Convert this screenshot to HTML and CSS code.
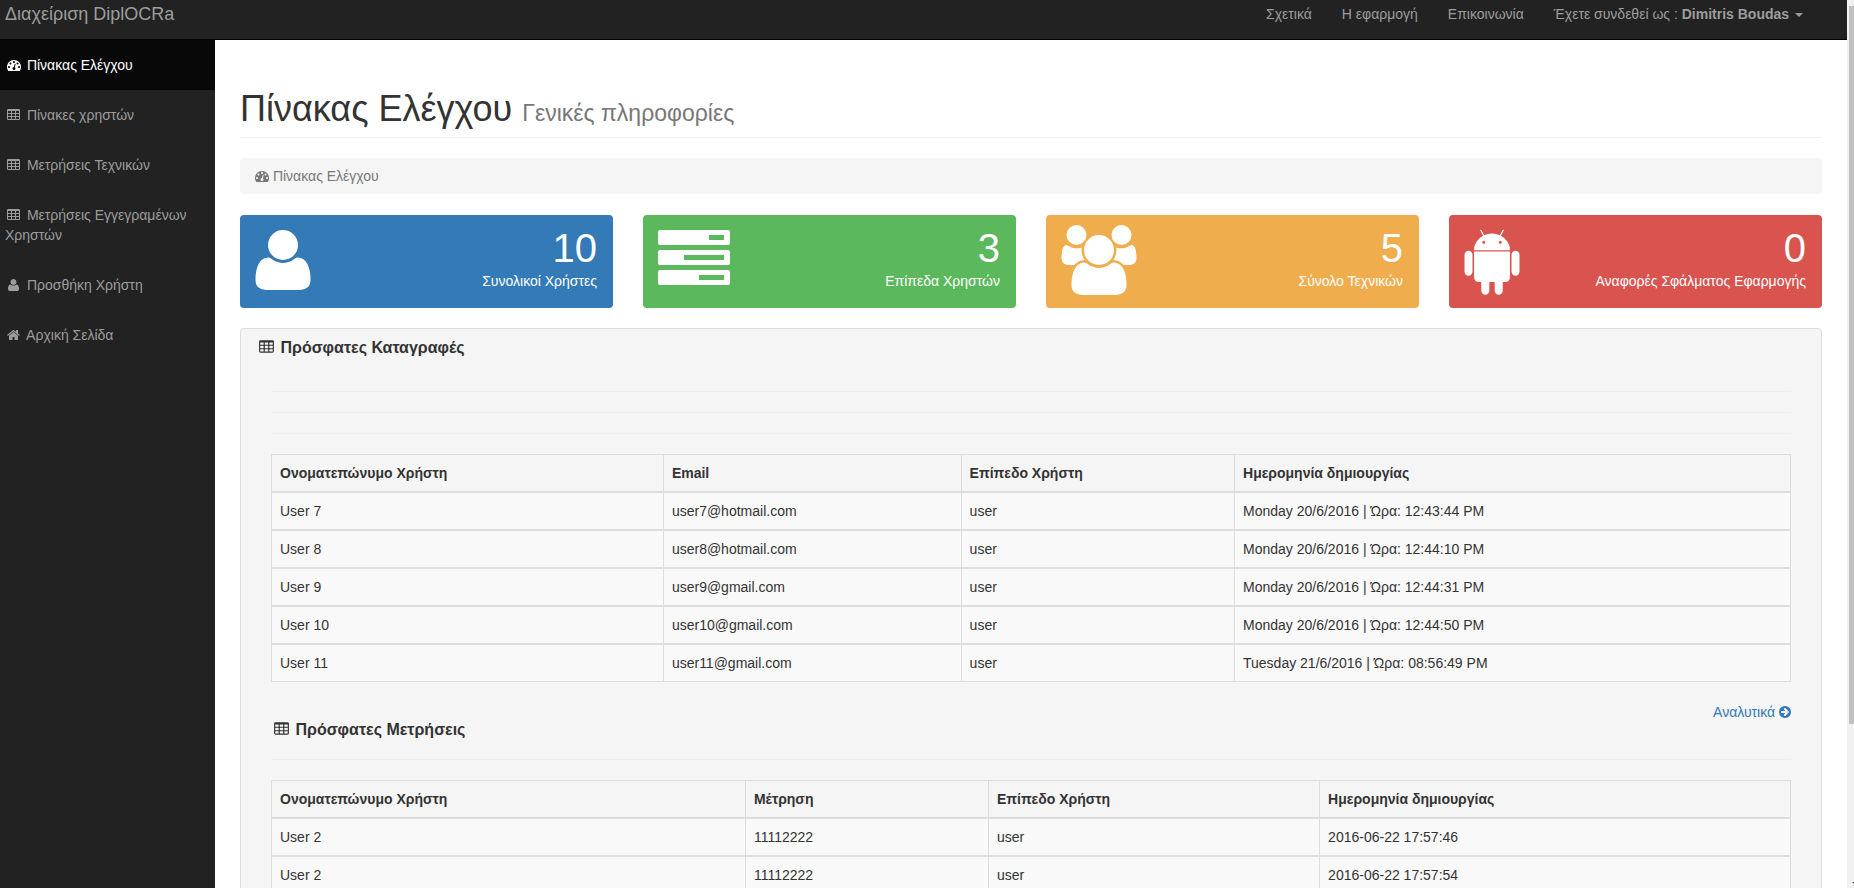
FILE: index.html
```html
<!DOCTYPE html>
<html lang="el">
<head>
<meta charset="utf-8">
<title>Διαχείριση DiplOCRa</title>
<link rel="stylesheet" href="styles.css">
</head>
<body>
<svg class="sprite" aria-hidden="true">
  <symbol id="dashboard" viewBox="0 0 1792 1792"><path fill-rule="evenodd" d="M384 1152q0-53-37.500-90.500t-90.500-37.500-90.500 37.500-37.500 90.500 37.500 90.500 90.500 37.500 90.500-37.500 37.500-90.500zm192-448q0-53-37.500-90.500t-90.500-37.500-90.500 37.500-37.500 90.500 37.500 90.500 90.500 37.500 90.500-37.500 37.500-90.500zm428 481l101-382q6-26-7.500-48.500t-38.500-29.500-48 6.500-30 39.500l-101 382q-60 5-107 43.500t-63 98.500q-20 77 20 146t117 89 146-20 89-117q16-60-6-117t-72-91zm660-33q0-53-37.500-90.500t-90.500-37.500-90.500 37.500-37.500 90.500 37.500 90.500 90.500 37.500 90.500-37.500 37.500-90.500zm-640-640q0-53-37.500-90.500t-90.500-37.500-90.500 37.500-37.500 90.500 37.500 90.500 90.500 37.500 90.500-37.500 37.500-90.500zm448 192q0-53-37.500-90.500t-90.500-37.500-90.500 37.500-37.500 90.500 37.500 90.500 90.500 37.500 90.500-37.500 37.500-90.500zm320 448q0 261-141 483-19 29-54 29h-1402q-35 0-54-29-141-221-141-483 0-182 71-348t191-286 286-191 348-71 348 71 286 191 191 286 71 348z"/></symbol>
  <symbol id="table" viewBox="0 0 1664 1792"><path fill-rule="evenodd" d="M160 128h1344q66 0 113 47t47 113v1088q0 66-47 113t-113 47H160q-66 0-113-47T0 1376V288q0-66 47-113t113-47zM128 416v192q0 32 32 32h320q32 0 32-32V416q0-32-32-32H160q-32 0-32 32zm512 0v192q0 32 32 32h320q32 0 32-32V416q0-32-32-32H672q-32 0-32 32zm512 0v192q0 32 32 32h320q32 0 32-32V416q0-32-32-32h-320q-32 0-32 32zM128 800v192q0 32 32 32h320q32 0 32-32V800q0-32-32-32H160q-32 0-32 32zm512 0v192q0 32 32 32h320q32 0 32-32V800q0-32-32-32H672q-32 0-32 32zm512 0v192q0 32 32 32h320q32 0 32-32V800q0-32-32-32h-320q-32 0-32 32zM128 1184v192q0 32 32 32h320q32 0 32-32v-192q0-32-32-32H160q-32 0-32 32zm512 0v192q0 32 32 32h320q32 0 32-32v-192q0-32-32-32H672q-32 0-32 32zm512 0v192q0 32 32 32h320q32 0 32-32v-192q0-32-32-32h-320q-32 0-32 32z"/></symbol>
  <symbol id="user" viewBox="256 128 1408 1792"><path d="M1664 1533q0 120-73 189.500t-194 69.500H523q-121 0-194-69.500T256 1533q0-53 3.500-103.500t14-109T300 1212t43-97.500 62-81 85.500-53.500T602 960q10 0 43 21.500t73 48 107 48 135 21.500 135-21.500 107-48 73-48 43-21.500q61 0 111.500 20t85.500 53.500 62 81 43 97.500 26.500 108.500 14 109 3.500 103.500zM1344 640q0 159-112.500 271.500T960 1024 688.500 911.500 576 640t112.500-271.500T960 256t271.500 112.500T1344 640z"/></symbol>
  <symbol id="home" viewBox="0 0 1664 1792"><path d="M1408 992v480q0 26-19 45t-45 19H960v-384H704v384H320q-26 0-45-19t-19-45V992l1-3 575-474 575 474q1 1 1 3zm223-69l-62 74q-8 9-21 11h-3q-13 0-21-7L832 424 140 1001q-12 8-24 7-13-2-21-11l-62-74q-8-10-7-23.500T37 878l719-599q32-26 76-26t76 26l244 204V288q0-14 9-23t23-9h192q14 0 23 9t9 23v408l219 182q10 8 11 21.500t-7 23.500z"/></symbol>
  <symbol id="arrow-right" viewBox="0 0 1536 1792"><path fill-rule="evenodd" d="M1285 896q0-27-18-45L905 489l-91-91q-18-18-45-18t-45 18l-91 91q-18 18-18 45t18 45l189 189H320q-26 0-45 19t-19 45v128q0 26 19 45t45 19h502l-189 189q-19 19-19 45t19 45l91 91q18 18 45 18t45-18l362-362 91-91q18-18 18-45zm251 0q0 209-103 385.500T1153.500 1561 768 1664t-385.500-103T103 1281.500 0 896t103-385.500T382.500 231 768 128t385.500 103T1433 510.500 1536 896z"/></symbol>
  <symbol id="tasks" viewBox="0 0 72 70"><path fill-rule="evenodd" d="M2 0h68q2 0 2 2v11q0 2-2 2H2q-2 0-2-2V2q0-2 2-2zm49 5v5h15V5zM2 20h68q2 0 2 2v11q0 2-2 2H2q-2 0-2-2V22q0-2 2-2zm24 5v5h40v-5zM2 40h68q2 0 2 2v11q0 2-2 2H2q-2 0-2-2V42q0-2 2-2zm39 5v5h25v-5z"/></symbol>
  <symbol id="group" viewBox="0 0 1920 1792"><path d="M593 896q-162 5-265 128H194q-82 0-138-40.500T0 865q0-353 124-353 6 0 43.500 21t97.500 42.500T384 597q67 0 133-23-5 37-5 66 0 139 81 256zm1071 637q0 120-73 189.500t-194 69.500H523q-121 0-194-69.500T256 1533q0-53 3.500-103.500t14-109T300 1212t43-97.500 62-81 85.500-53.500T602 960q10 0 43 21.500t73 48 107 48 135 21.500 135-21.500 107-48 73-48 43-21.500q61 0 111.500 20t85.500 53.500 62 81 43 97.500 26.500 108.500 14 109 3.500 103.500zM640 256q0 106-75 181t-181 75-181-75-75-181 75-181T384 0t181 75 75 181zm704 384q0 159-112.500 271.500T960 1024 688.500 911.500 576 640t112.500-271.500T960 256t271.500 112.500T1344 640zm576 225q0 78-56 118.500t-138 40.500h-134q-103-123-265-128 81-117 81-256 0-29-5-66 66 23 133 23 59 0 119-21.500t97.500-42.500 43.500-21q124 0 124 353zm-128-609q0 106-75 181t-181 75-181-75-75-181 75-181 181-75 181 75 75 181z"/></symbol>
  <symbol id="android" viewBox="0 0 1408 1792"><path fill-rule="evenodd" d="M493 483q16 0 27.500-11.500T532 444t-11.500-27.500T493 405t-27 11.500-11 27.500 11 27.500 27 11.500zm422 0q16 0 27-11.500t11-27.500-11-27.500-27-11.500-27.500 11.500T876 444t11.500 27.500T915 483zM103 661q42 0 72 30t30 72v430q0 43-29.500 73t-72.500 30-73-30-30-73V763q0-42 30-72t73-30zm1060 19v666q0 46-32 78t-77 32h-75v227q0 43-30 73t-73 30-73-30-30-73v-227H635v227q0 43-30 73t-73 30q-42 0-72-30t-30-73l-1-227h-74q-46 0-78-32t-32-78V680h918zM931 275q107 55 171 153.500t64 215.500H241q0-117 64-215.500T477 275L406 144q-7-13 5-20 13-6 20 6l72 132q95-42 201-42t201 42l72-132q7-12 20-6 12 7 5 20zm477 488v430q0 43-30 73t-73 30q-42 0-72-30t-30-73V763q0-43 30-72.500t72-29.500q43 0 73 29.500t30 72.500z"/></symbol>
</svg>

<header class="navbar">
  <a class="brand" href="#">Διαχείριση DiplOCRa</a>
  <nav class="top-nav">
    <a href="#">Σχετικά</a>
    <a href="#">Η εφαρμογή</a>
    <a href="#">Επικοινωνία</a>
    <a href="#">Έχετε συνδεθεί ως : <b>Dimitris Boudas</b> <span class="caret"></span></a>
  </nav>
</header>

<div class="layout">
  <nav class="sidebar">
    <a class="active" href="#"><svg class="icon icon-dashboard"><use href="#dashboard"/></svg> Πίνακας Ελέγχου</a>
    <a href="#"><svg class="icon icon-table"><use href="#table"/></svg> Πίνακες χρηστών</a>
    <a href="#"><svg class="icon icon-table"><use href="#table"/></svg> Μετρήσεις Τεχνικών</a>
    <a href="#"><svg class="icon icon-table"><use href="#table"/></svg> Μετρήσεις Εγγεγραμένων Χρηστών</a>
    <a href="#"><svg class="icon icon-user"><use href="#user"/></svg> Προσθήκη Χρήστη</a>
    <a href="#"><svg class="icon icon-home"><use href="#home"/></svg> Αρχική Σελίδα</a>
  </nav>

  <main class="content">
    <h1 class="page-header">Πίνακας Ελέγχου <small>Γενικές πληροφορίες</small></h1>
    <ol class="breadcrumb"><li><svg class="icon"><use href="#dashboard"/></svg> Πίνακας Ελέγχου</li></ol>

    <section class="cards">
      <article class="card blue"><svg class="art art-user"><use href="#user"/></svg><div class="figure"><div class="huge">10</div><div>Συνολικοί Χρήστες</div></div></article>
      <article class="card green"><svg class="art art-tasks"><use href="#tasks"/></svg><div class="figure"><div class="huge">3</div><div>Επίπεδα Χρηστών</div></div></article>
      <article class="card yellow"><svg class="art art-group"><use href="#group"/></svg><div class="figure"><div class="huge">5</div><div>Σύνολο Τεχνικών</div></div></article>
      <article class="card red"><svg class="art art-android"><use href="#android"/></svg><div class="figure"><div class="huge">0</div><div>Αναφορές Σφάλματος Εφαρμογής</div></div></article>
    </section>

    <section class="panel">
      <h3 class="panel-title"><svg class="icon"><use href="#table"/></svg> Πρόσφατες Καταγραφές</h3>
      <div class="panel-body">
        <hr><hr><hr>
        <table class="users">
          <colgroup><col class="u1"><col class="u2"><col class="u3"><col></colgroup>
          <thead><tr><th>Ονοματεπώνυμο Χρήστη</th><th>Email</th><th>Επίπεδο Χρήστη</th><th>Ημερομηνία δημιουργίας</th></tr></thead>
          <tbody>
            <tr><td>User 7</td><td>user7@hotmail.com</td><td>user</td><td>Monday 20/6/2016 | Ώρα: 12:43:44 PM</td></tr>
            <tr><td>User 8</td><td>user8@hotmail.com</td><td>user</td><td>Monday 20/6/2016 | Ώρα: 12:44:10 PM</td></tr>
            <tr><td>User 9</td><td>user9@gmail.com</td><td>user</td><td>Monday 20/6/2016 | Ώρα: 12:44:31 PM</td></tr>
            <tr><td>User 10</td><td>user10@gmail.com</td><td>user</td><td>Monday 20/6/2016 | Ώρα: 12:44:50 PM</td></tr>
            <tr><td>User 11</td><td>user11@gmail.com</td><td>user</td><td>Tuesday 21/6/2016 | Ώρα: 08:56:49 PM</td></tr>
          </tbody>
        </table>
        <div class="section-head">
          <h3 class="panel-title"><svg class="icon"><use href="#table"/></svg> Πρόσφατες Μετρήσεις</h3>
          <a class="more" href="#">Αναλυτικά <svg class="icon"><use href="#arrow-right"/></svg></a>
        </div>
        <hr>
        <table class="readings">
          <colgroup><col class="r1"><col class="r2"><col class="r3"><col></colgroup>
          <thead><tr><th>Ονοματεπώνυμο Χρήστη</th><th>Μέτρηση</th><th>Επίπεδο Χρήστη</th><th>Ημερομηνία δημιουργίας</th></tr></thead>
          <tbody>
            <tr><td>User 2</td><td>11112222</td><td>user</td><td>2016-06-22 17:57:46</td></tr>
            <tr><td>User 2</td><td>11112222</td><td>user</td><td>2016-06-22 17:57:54</td></tr>
          </tbody>
        </table>
      </div>
    </section>
  </main>
</div>
<div class="scrollbar"><div class="thumb"></div></div>
</body>
</html>
```
FILE: styles.css
```css
* { box-sizing: border-box; }
html, body { height: 100%; }
body {
  margin: 0;
  display: flex;
  flex-direction: column;
  overflow: hidden;
  padding-right: 7px;
  background: #222;
  color: #333;
  font: 14px/20px "Liberation Sans", Arial, sans-serif;
}
a { text-decoration: none; }
.sprite { display: none; }
.icon { height: 14px; width: 14px; fill: currentColor; vertical-align: -2px; }

.navbar {
  flex: none;
  display: flex;
  justify-content: space-between;
  height: 40px;
  padding: 4px 29px 0 5px;
  border-bottom: 1px solid #000;
  background: #222;
}
.navbar a { color: #9d9d9d; }
.brand { font-size: 18px; }
.top-nav { display: flex; }
.top-nav a { padding: 0 15px; }
.caret {
  display: inline-block;
  margin-left: 2px;
  vertical-align: middle;
  border-top: 4px solid;
  border-left: 4px solid transparent;
  border-right: 4px solid transparent;
}

.layout { flex: 1; display: flex; min-height: 0; }
.sidebar { flex: none; width: 215px; }
.sidebar a { display: block; padding: 15px 15px 15px 5px; color: #9d9d9d; }
.sidebar a.active { background: #080808; color: #fff; }
.icon-dashboard { margin: 0 2px; }
.icon-table, .icon-home { width: 13px; margin: 0 3px 0 2px; }
.icon-user { width: 11px; margin: 0 4px 0 3px; }

.content { flex: 1; min-width: 0; overflow: hidden; padding: 50px 25px 0; background: #fff; }
.page-header {
  margin: 0 0 20px;
  padding-bottom: 9px;
  border-bottom: 1px solid #eee;
  font-size: 36px;
  line-height: 38px;
  font-weight: 400;
}
.page-header small { font-size: 23px; line-height: 23px; color: #777; }
.page-header { height: 48px; }
.breadcrumb {
  margin: 0 0 21px;
  padding: 8px 15px;
  list-style: none;
  border-radius: 4px;
  background: #f5f5f5;
  color: #777;
}

.cards { display: grid; grid-template-columns: repeat(4, 1fr); gap: 30px; }
.card {
  display: flex;
  justify-content: space-between;
  height: 93px;
  padding: 10px 16px 10px 15px;
  border-radius: 4px;
  color: #fff;
}
.blue { background: #337ab7; }
.green { background: #5cb85c; }
.yellow { background: #f0ad4e; }
.red { background: #d9534f; }
.art { height: 70px; fill: #fff; }
.art-user { width: 56px; }
.art-tasks { width: 72px; margin-top: 5px; }
.art-group { width: 76px; }
.art-android { width: 56px; }
.figure { text-align: right; padding-top: 3px; }
.huge { margin-bottom: 3px; font-size: 40px; line-height: 40px; }

.panel { margin-top: 20px; border: 1px solid #ddd; border-radius: 4px; background: #f5f5f5; }
.panel-title { margin: 0; font-size: 16px; line-height: 18px; font-weight: 700; }
.panel-title .icon { width: 15px; height: 16px; margin-right: 2px; }
.panel > .panel-title { padding: 10px 18px; }
.panel-body { padding: 4px 30px 30px; }
hr { height: 1px; margin: 20px 0; border: 0; background: #eee; }
table { width: 100%; border-collapse: collapse; table-layout: fixed; }
th, td { height: 38px; padding: 8px; border: 1px solid #ddd; text-align: left; }
th { padding-bottom: 7px; height: 37px; }
tbody td { border-top-width: 2px; background: #f9f9f9; }
.u1 { width: 25.8%; }
.u2 { width: 19.6%; }
.u3 { width: 18%; }
.r1 { width: 31.2%; }
.r2 { width: 16%; }
.r3 { width: 21.8%; }
.section-head { display: flex; justify-content: space-between; align-items: flex-start; padding-top: 20px; }
.section-head .panel-title { padding: 19px 3px 0; }
.more { color: #337ab7; }
.more .icon { width: 12px; }

.scrollbar { position: fixed; top: 0; right: 0; bottom: 0; width: 7px; padding: 6px 0 0 2px; background: #f1f1f1; }
.thumb { height: 81.4%; background: #c1c1c1; }
.scrollbar::after {
  content: "";
  position: absolute;
  right: 0;
  bottom: 4px;
  border-top: 2px solid #505050;
  border-left: 2px solid transparent;
}
```
